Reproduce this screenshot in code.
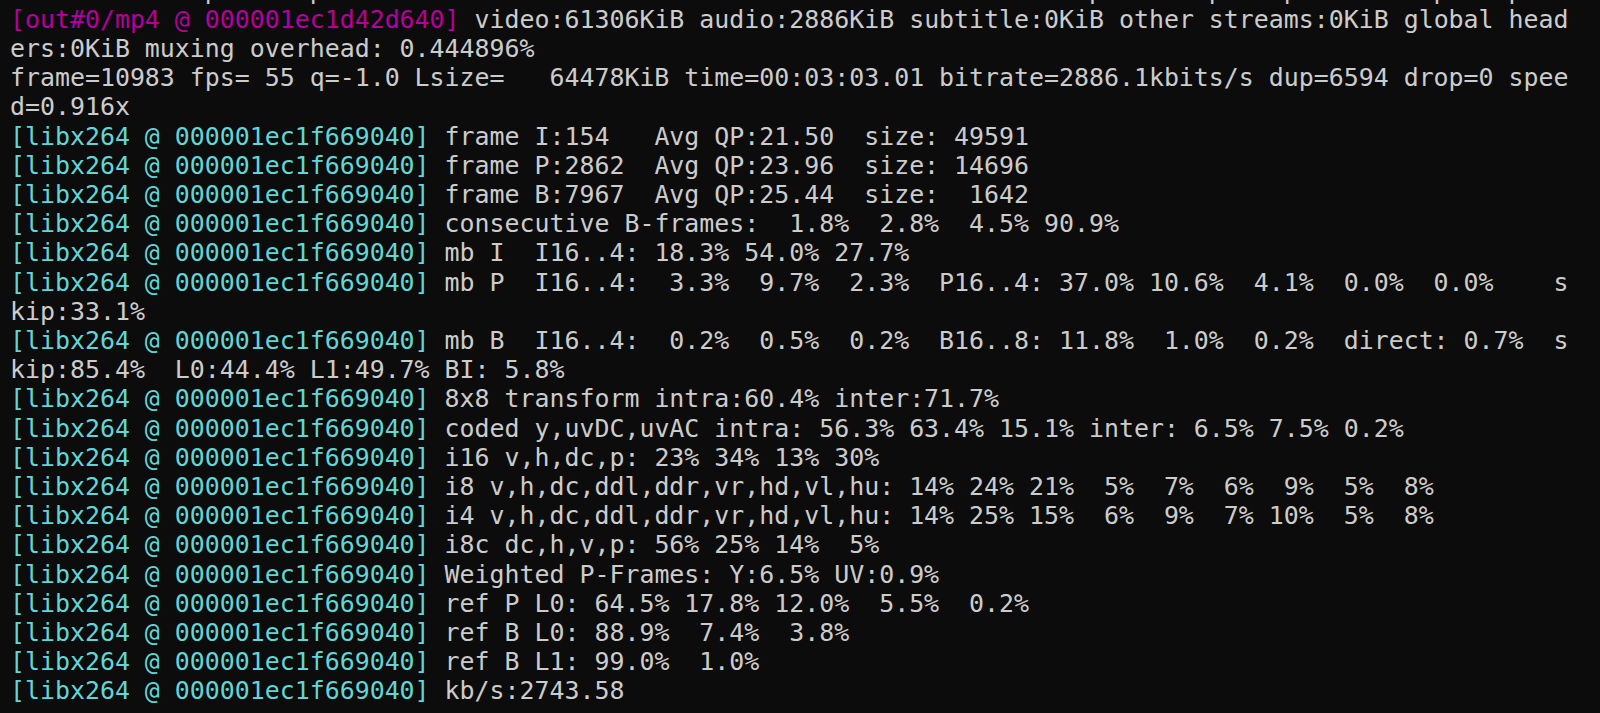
const PREFIX = "[libx264 @ 000001ec1f669040]"

// only the descenders of the line above are still on screen
const cutLine = (() => {
  const chars = Array(104).fill(" ")
  for (const i of [13, 20, 72, 80, 85, 95, 100]) chars[i] = "p"
  return chars.join("")
})()

const rows: { tag?: "out" | "lib"; text: string }[] = [
  { text: cutLine },
  { tag: "out", text: " video:61306KiB audio:2886KiB subtitle:0KiB other streams:0KiB global head" },
  { text: "ers:0KiB muxing overhead: 0.444896%" },
  { text: "frame=10983 fps= 55 q=-1.0 Lsize=   64478KiB time=00:03:03.01 bitrate=2886.1kbits/s dup=6594 drop=0 spee" },
  { text: "d=0.916x" },
  { tag: "lib", text: " frame I:154   Avg QP:21.50  size: 49591" },
  { tag: "lib", text: " frame P:2862  Avg QP:23.96  size: 14696" },
  { tag: "lib", text: " frame B:7967  Avg QP:25.44  size:  1642" },
  { tag: "lib", text: " consecutive B-frames:  1.8%  2.8%  4.5% 90.9%" },
  { tag: "lib", text: " mb I  I16..4: 18.3% 54.0% 27.7%" },
  { tag: "lib", text: " mb P  I16..4:  3.3%  9.7%  2.3%  P16..4: 37.0% 10.6%  4.1%  0.0%  0.0%    s" },
  { text: "kip:33.1%" },
  { tag: "lib", text: " mb B  I16..4:  0.2%  0.5%  0.2%  B16..8: 11.8%  1.0%  0.2%  direct: 0.7%  s" },
  { text: "kip:85.4%  L0:44.4% L1:49.7% BI: 5.8%" },
  { tag: "lib", text: " 8x8 transform intra:60.4% inter:71.7%" },
  { tag: "lib", text: " coded y,uvDC,uvAC intra: 56.3% 63.4% 15.1% inter: 6.5% 7.5% 0.2%" },
  { tag: "lib", text: " i16 v,h,dc,p: 23% 34% 13% 30%" },
  { tag: "lib", text: " i8 v,h,dc,ddl,ddr,vr,hd,vl,hu: 14% 24% 21%  5%  7%  6%  9%  5%  8%" },
  { tag: "lib", text: " i4 v,h,dc,ddl,ddr,vr,hd,vl,hu: 14% 25% 15%  6%  9%  7% 10%  5%  8%" },
  { tag: "lib", text: " i8c dc,h,v,p: 56% 25% 14%  5%" },
  { tag: "lib", text: " Weighted P-Frames: Y:6.5% UV:0.9%" },
  { tag: "lib", text: " ref P L0: 64.5% 17.8% 12.0%  5.5%  0.2%" },
  { tag: "lib", text: " ref B L0: 88.9%  7.4%  3.8%" },
  { tag: "lib", text: " ref B L1: 99.0%  1.0%" },
  { tag: "lib", text: " kb/s:2743.58" },
]

export default function App() {
  return (
    <div className="h-[713px] w-[1600px] overflow-hidden bg-[#0c0c0c]">
      <div
        className="-mt-[24.4px] pl-[10px] text-[24.9px] leading-[29.2px] text-[#cccccc] whitespace-pre"
        style={{ fontFamily: '"DejaVu Sans Mono", monospace' }}
      >
        {rows.map((row, i) => (
          <div key={i}>
            {row.tag === "out" && <span className="text-[#b4009e]">[out#0/mp4 @ 000001ec1d42d640]</span>}
            {row.tag === "lib" && <span className="text-[#61d6d6]">{PREFIX}</span>}
            {row.text}
          </div>
        ))}
      </div>
    </div>
  )
}
